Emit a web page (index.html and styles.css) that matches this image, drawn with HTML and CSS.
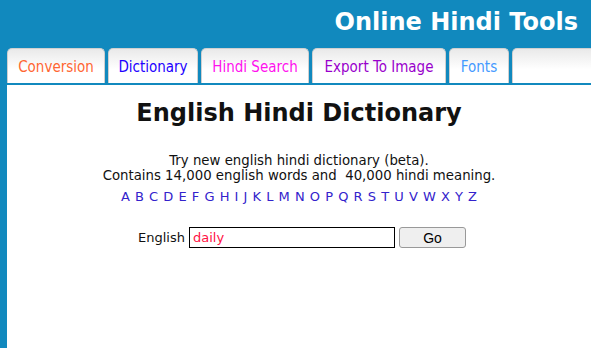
FILE: index.html
```html
<!DOCTYPE html>
<html>
<head>
	<title>Online Hindi Tools</title>
	<link rel="stylesheet" href="styles.css">
</head>
<body>
	<div class="header">
		<div class="site-title">Online Hindi Tools</div>
	</div>

	<ul class="tabs">
		<li class="tab tab-conversion">Conversion</li>
		<li class="tab tab-dictionary">Dictionary</li>
		<li class="tab tab-search">Hindi Search</li>
		<li class="tab tab-export">Export To Image</li>
		<li class="tab tab-fonts">Fonts</li>
		<li class="tab tab-more"></li>
	</ul>

	<div class="content">
		<h1>English Hindi Dictionary</h1>
		<p class="intro">
			Try new english hindi dictionary (beta).<br>
			Contains 14,000 english words and &nbsp;40,000 hindi meaning.
		</p>
		<div class="letters">
			<a href="#">A</a> <a href="#">B</a> <a href="#">C</a> <a href="#">D</a> <a href="#">E</a> <a href="#">F</a> <a href="#">G</a> <a href="#">H</a> <a href="#">I</a> <a href="#">J</a> <a href="#">K</a> <a href="#">L</a> <a href="#">M</a> <a href="#">N</a> <a href="#">O</a> <a href="#">P</a> <a href="#">Q</a> <a href="#">R</a> <a href="#">S</a> <a href="#">T</a> <a href="#">U</a> <a href="#">V</a> <a href="#">W</a> <a href="#">X</a> <a href="#">Y</a> <a href="#">Z</a>
		</div>

		<form class="search">
			<label for="word">English</label>
			<input type="text" id="word" name="word" value="daily">
			<button type="submit">Go</button>
		</form>
	</div>
</body>
</html>
```

FILE: styles.css
```css
html, body {
	height: 100%;
}

body {
	margin: 0;
	background: #1189be;
	font-family: "DejaVu Sans", Verdana, sans-serif;
	overflow: hidden;
	display: flex;
	flex-direction: column;
}

.header {
	height: 48px;
	display: flex;
	justify-content: flex-end;
	align-items: center;
	padding-right: 13px;
}

.site-title {
	color: #fff;
	font-weight: bold;
	font-size: 24px;
	margin-top: -4px;
}

.tabs {
	list-style: none;
	margin: 0;
	padding: 0 0 0 7px;
	display: flex;
	gap: 3px;
	height: 35px;
	white-space: nowrap;
}

.tab {
	flex: none;
	box-sizing: border-box;
	height: 35px;
	padding-top: 9px;
	text-align: center;
	border: 1px solid #d0d0d0;
	border-bottom: none;
	border-radius: 5px 5px 0 0;
	background: linear-gradient(#e9e9e9, #fff 60%);
	font-size: 15px;
	font-stretch: condensed;
}

.tab-conversion { width: 98px; color: #ff6633; }
.tab-dictionary { width: 90px; color: #2200ff; }
.tab-search { width: 108px; color: #ff11ee; }
.tab-export { width: 134px; color: #9900cc; }
.tab-fonts { width: 60px; color: #4499ff; }
.tab-more { width: 100px; }

.content {
	flex: 1;
	margin-left: 7px;
	margin-top: 2px;
	background: #fff;
	text-align: center;
	color: #111;
}

h1 {
	font-size: 24px;
	margin: 13px 0 0;
	line-height: 30px;
}

.intro {
	font-size: 13.3px;
	line-height: 15px;
	margin: 25px 0 0;
}

.letters {
	margin-top: 6px;
	font-size: 13px;
	line-height: 16px;
	word-spacing: 1px;
}

.letters a {
	color: #3322cc;
	text-decoration: none;
}

.search {
	margin-top: 22px;
	padding-left: 6px;
	display: flex;
	justify-content: center;
	align-items: center;
	gap: 4px;
}

.search label {
	font-size: 13px;
	color: #111;
}

.search input {
	box-sizing: border-box;
	width: 206px;
	height: 21px;
	border: 1px solid #000;
	padding: 0 3px;
	font-family: "DejaVu Sans", Verdana, sans-serif;
	font-size: 13px;
	color: #ff1144;
}

.search button {
	box-sizing: border-box;
	width: 67px;
	height: 21px;
	background: #efefef;
	border: 1px solid #999;
	border-radius: 3px;
	font-family: "Liberation Sans", Arial, sans-serif;
	font-size: 14px;
	color: #000;
}
```
